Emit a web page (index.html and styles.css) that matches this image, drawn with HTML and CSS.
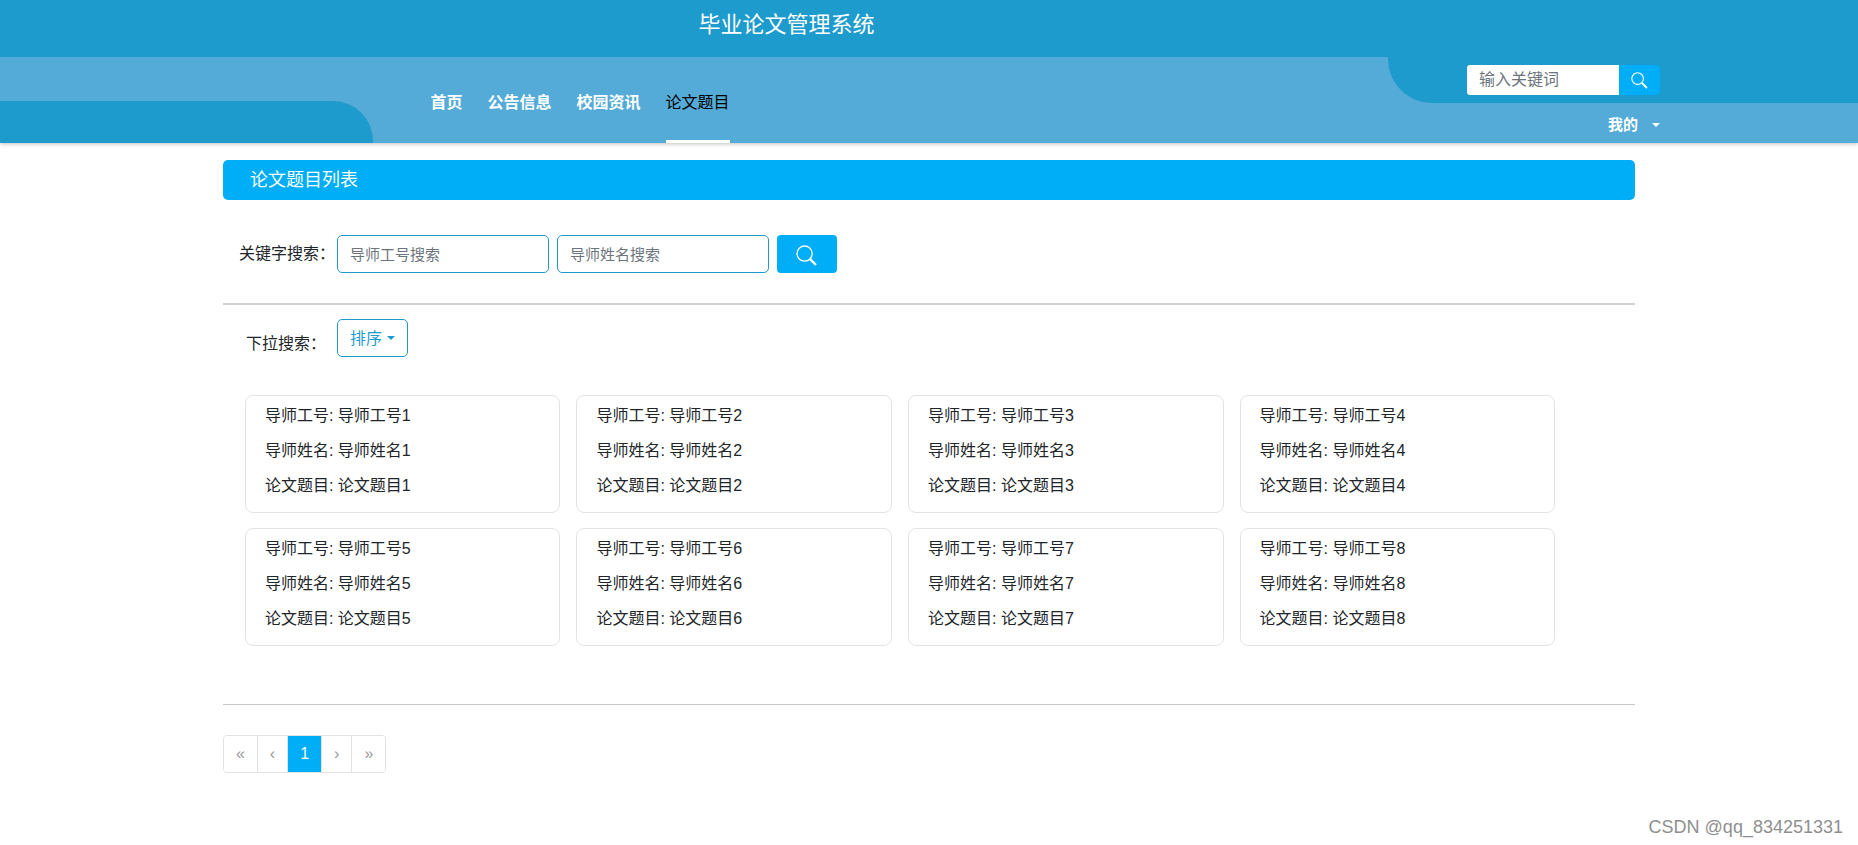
FILE: index.html
```
<!DOCTYPE html>
<html lang="zh-CN">
<head>
    <meta charset="UTF-8">
    <meta name="viewport" content="width=device-width, initial-scale=1.0">
    <title>毕业论文管理系统</title>
    <link rel="stylesheet" href="styles.css">
</head>
<body>
    <header class="header">
        <h1 class="site-title">毕业论文管理系统</h1>
        <div class="header-bar">
            <div class="header-left"></div>
            <nav class="nav">
                <a class="nav-link" href="#">首页</a>
                <a class="nav-link" href="#">公告信息</a>
                <a class="nav-link" href="#">校园资讯</a>
                <a class="nav-link active" href="#">论文题目</a>
            </nav>
            <div class="header-right">
                <form class="header-search">
                    <input type="text" placeholder="输入关键词" aria-label="输入关键词">
                    <button type="button" aria-label="搜索">
                        <svg width="17" height="17" viewBox="0 0 17 17" fill="none" stroke="currentColor">
                            <circle cx="6.6" cy="6.6" r="5.8" stroke-width="1.1"/>
                            <path d="M10.8 10.8L16 16" stroke-width="1.9"/>
                        </svg>
                    </button>
                </form>
                <button class="user-menu" type="button" aria-haspopup="true">我的<span class="caret"></span></button>
            </div>
        </div>
    </header>

    <main class="container">
        <h2 class="list-title">论文题目列表</h2>

        <form class="search-row">
            <label class="row-label" for="teacherNo">关键字搜索：</label>
            <input class="search-input" id="teacherNo" type="text" placeholder="导师工号搜索">
            <input class="search-input" type="text" placeholder="导师姓名搜索" aria-label="导师姓名搜索">
            <button class="search-btn" type="button" aria-label="搜索">
                <svg width="21" height="21" viewBox="0 0 21 21" fill="none" stroke="currentColor">
                    <circle cx="8.6" cy="8.6" r="7.6" stroke-width="1.3"/>
                    <path d="M13.8 13.8L20 20" stroke-width="2.4"/>
                </svg>
            </button>
        </form>

        <div class="sort-row">
            <label class="row-label" for="sort">下拉搜索：</label>
            <div class="sort-box">
                <select id="sort">
                    <option>排序</option>
                </select>
                <span class="caret"></span>
            </div>
        </div>

        <div class="card-grid" id="cardGrid">
            <!-- 论文题目卡片 -->
        </div>

        <nav class="pager" aria-label="分页">
            <div class="pagination">
                <button type="button" disabled>«</button>
                <button type="button" disabled>‹</button>
                <button class="active" type="button">1</button>
                <button type="button" disabled>›</button>
                <button type="button" disabled>»</button>
            </div>
        </nav>
    </main>

    <footer class="footer">CSDN @qq_834251331</footer>

    <script>
        const fields = ['导师工号', '导师姓名', '论文题目'];
        const grid = document.getElementById('cardGrid');

        // 生成卡片
        for (let i = 1; i <= 8; i++) {
            const card = document.createElement('div');
            card.className = 'card';
            card.innerHTML = fields.map(name => `<p>${name}: ${name}${i}</p>`).join('');
            grid.appendChild(card);
        }
    </script>
</body>
</html>
```
FILE: styles.css
```
:root {
    --primary-color: #1e9bcd;
    --bar-color: #54abd7;
    --accent-color: #00adf7;
}

* {
    box-sizing: border-box;
}

body {
    margin: 0;
    min-height: 100vh;
    display: flex;
    flex-direction: column;
    font-family: "Liberation Sans", "Noto Sans CJK SC", sans-serif;
    font-size: 16px;
    line-height: 24px;
    color: #212529;
    background: #fff;
}

input,
button,
select {
    font-family: inherit;
    font-size: 16px;
    margin: 0;
}

input::placeholder {
    color: #6c757d;
    opacity: 1;
}

.caret {
    border-top: 4px solid currentColor;
    border-left: 4px solid transparent;
    border-right: 4px solid transparent;
}

/* 头部 */
.header {
    background: var(--primary-color);
    box-shadow: 0 1px 4px rgba(0, 0, 0, 0.25);
}

.site-title {
    margin: 0;
    padding: 9px 0 16px 37.6%;
    font-size: 22px;
    font-weight: 400;
    line-height: 32px;
    color: #fff;
}

.header-bar {
    display: flex;
    height: 86px;
    background: var(--bar-color);
}

.header-left {
    width: 20.1%;
    height: 42px;
    align-self: flex-end;
    background: var(--primary-color);
    border-top-right-radius: 40px;
}

.nav {
    flex: 1;
    display: flex;
    gap: 25px;
    padding-left: 57px;
}

.nav-link {
    padding-top: 34px;
    border-bottom: 3px solid transparent;
    font-weight: 700;
    color: #fff;
    text-decoration: none;
    white-space: nowrap;
}

.nav-link.active {
    font-weight: 400;
    color: #000;
    border-bottom-color: #fff;
}

.header-right {
    width: 25.3%;
    display: flex;
    flex-direction: column;
}

.header-search {
    display: flex;
    padding: 8px 0 8px 79px;
    background: var(--primary-color);
    border-bottom-left-radius: 44px;
}

.header-search input {
    width: 152px;
    height: 30px;
    padding: 0 12px;
    border: 0;
    border-radius: 3px 0 0 3px;
}

.header-search button {
    width: 41px;
    padding: 0;
    display: flex;
    align-items: center;
    justify-content: center;
    border: 0;
    border-radius: 0 4px 4px 0;
    color: #fff;
    background: var(--accent-color);
}

.user-menu {
    display: flex;
    align-items: center;
    gap: 14px;
    margin: 10px 0 0 220px;
    padding: 0;
    border: 0;
    background: none;
    color: #fff;
    font-size: 15px;
    font-weight: 700;
    line-height: 24px;
}

/* 内容 */
.container {
    width: 76%;
    margin: 0 auto;
    padding-top: 17px;
}

.list-title {
    margin: 0;
    padding: 8px 27px;
    border-radius: 5px;
    font-size: 18px;
    font-weight: 400;
    line-height: 24px;
    color: #fff;
    background: var(--accent-color);
}

.search-row,
.sort-row {
    display: flex;
    align-items: center;
}

.search-row {
    gap: 8px;
    padding: 35px 0 30px;
    border-bottom: 2px solid #d3d3d3;
}

.row-label {
    width: 106px;
    padding-left: 20px;
    text-align: center;
    white-space: nowrap;
}

.search-row .row-label {
    padding-left: 16px;
    text-align: left;
}

.search-input {
    width: 212px;
    height: 38px;
    padding: 0 12px;
    border: 1px solid var(--primary-color);
    border-radius: 5px;
    font-size: 15px;
}

.search-btn {
    width: 60px;
    height: 38px;
    padding: 3px 0 0;
    display: flex;
    align-items: center;
    justify-content: center;
    border: 0;
    border-radius: 4px;
    color: #fff;
    background: var(--accent-color);
}

.sort-row {
    gap: 8px;
    padding-top: 14px;
}

.sort-row .row-label {
    padding-top: 12px;
}

.sort-box {
    position: relative;
    color: var(--primary-color);
}

.sort-box select {
    appearance: none;
    width: 71px;
    height: 38px;
    padding: 0 12px;
    border: 1px solid var(--primary-color);
    border-radius: 5px;
    color: inherit;
    background: #fff;
}

.sort-box .caret {
    position: absolute;
    top: 17px;
    right: 13px;
    pointer-events: none;
}

.card-grid {
    display: grid;
    grid-template-columns: repeat(4, 1fr);
    gap: 15px 16px;
    margin: 38px 80px 0 22px;
    padding-bottom: 58px;
}

.card {
    padding: 8px 19px 14px;
    border: 1px solid #e3e3e3;
    border-radius: 8px;
}

.card p {
    margin: 0 0 11px;
}

.card p:last-child {
    margin-bottom: 0;
}

/* 分页 */
.pager {
    padding-top: 30px;
    border-top: 1px solid #c8c8c8;
}

.pagination {
    display: inline-flex;
    height: 38px;
    border: 1px solid #e3e3e3;
    border-radius: 4px;
    overflow: hidden;
}

.pagination button {
    padding: 0 12px;
    border: 0;
    border-right: 1px solid #e3e3e3;
    color: #999;
    background: #fff;
}

.pagination button:last-child {
    border-right: 0;
}

.pagination .active {
    color: #fff;
    background: var(--accent-color);
}

.footer {
    margin-top: auto;
    padding: 0 15px 6px;
    text-align: right;
    font-size: 18px;
    color: #8f8f8f;
}
```
